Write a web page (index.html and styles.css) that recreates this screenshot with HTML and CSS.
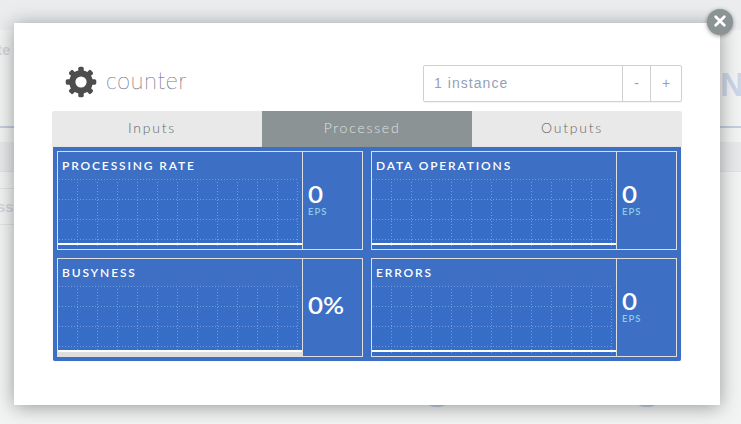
FILE: index.html
```html
<!DOCTYPE html>
<html lang="en">
<head>
<meta charset="utf-8">
<title>counter</title>
<link rel="stylesheet" href="styles.css">
</head>
<body>
<svg class="defs" width="0" height="0" aria-hidden="true">
  <symbol id="grid" viewBox="0 0 244 69">
    <path class="dots" d="M1 .5H241M1 20.5H241M1 40.5H241M1 60.5H241"/>
    <path class="dots" d="M19.500 3V69M39.500 3V69M59.500 3V69M79.500 3V69M99.500 3V69M119.500 3V69M139.500 3V69M159.500 3V69M179.500 3V69M199.500 3V69M219.500 3V69M239.500 3V69"/>
  </symbol>
</svg>
<div class="page">
  <div class="page-top"></div>
  <div class="page-chart"><span class="page-label">te</span><span class="page-title">N</span></div>
  <div class="page-band"></div>
  <div class="page-gap"></div>
  <div class="page-row">sso</div>
  <div class="page-canvas">
    <div class="node"></div>
    <div class="node"></div>
  </div>
</div>
<section class="modal">
  <button class="close" aria-label="Close"><svg width="14" height="14" viewBox="0 0 14 14"><path d="M2.700 1.700L11.300 10.300M11.300 1.700L2.700 10.300"/></svg></button>
  <header class="head">
    <svg class="gear" width="32" height="32" viewBox="-16 -16 32 32">
      <g fill="#4d4d4d">
        <rect x="-2.700" y="-15.300" width="5.400" height="30.600" rx="1.600"/>
        <rect x="-15.300" y="-2.700" width="30.600" height="5.400" rx="1.600"/>
        <g transform="rotate(45)"><rect x="-2.700" y="-15.300" width="5.400" height="30.600" rx="1.600"/><rect x="-15.300" y="-2.700" width="30.600" height="5.400" rx="1.600"/></g>
        <circle r="11.800"/>
      </g>
      <circle r="5.600" fill="#fff"/>
    </svg>
    <h1>counter</h1>
    <div class="stepper"><span class="value">1 instance</span><button class="minus">-</button><button class="plus">+</button></div>
  </header>
  <nav class="tabs"><span>Inputs</span><span class="active">Processed</span><span>Outputs</span></nav>
  <div class="panel">
    <article class="card">
      <div class="chart"><h2>PROCESSING RATE</h2><div class="plot"><svg width="244" height="69"><use href="#grid"/></svg></div></div>
      <div class="stat"><b>0</b><small>EPS</small></div>
    </article>
    <article class="card">
      <div class="chart"><h2>DATA OPERATIONS</h2><div class="plot"><svg width="244" height="69"><use href="#grid"/></svg></div></div>
      <div class="stat"><b>0</b><small>EPS</small></div>
    </article>
    <article class="card">
      <div class="chart"><h2>BUSYNESS</h2><div class="plot filled"><svg width="244" height="69"><use href="#grid"/></svg></div></div>
      <div class="stat percent"><b>0%</b></div>
    </article>
    <article class="card">
      <div class="chart"><h2>ERRORS</h2><div class="plot"><svg width="244" height="69"><use href="#grid"/></svg></div></div>
      <div class="stat"><b>0</b><small>EPS</small></div>
    </article>
  </div>
</section>
</body>
</html>
```

FILE: styles.css
```css
* { box-sizing: border-box; }
body { margin: 0; width: 741px; height: 424px; overflow: hidden; position: relative; background: #f2f4f3; font-family: Lato, sans-serif; }
button { padding: 0; font: inherit; color: inherit; background: none; border: 0; }
.defs { position: absolute; }
.page { height: 424px; overflow: hidden; }
.page-top { height: 30px; background: #ebecee; }
.page-chart { height: 98px; border-bottom: 2px solid #c5cde0; display: flex; justify-content: space-between; font: bold 15px "Liberation Sans", sans-serif; color: #d5d7dc; }
.page-label { margin: 11px 0 0 -3px; }
.page-title { margin: 37px -3px 0 0; font-size: 33px; line-height: 36px; color: #cdd7ea; }
.page-band { height: 30px; margin-top: 14px; background: #e8e9eb; border-bottom: 1px solid #e1e3e4; }
.page-gap { height: 16px; }
.page-row { width: 40px; height: 37px; border: solid #e1e3e3; border-width: 1px 0; font: bold 15px/35px "Liberation Sans", sans-serif; color: #d5d7dc; text-indent: -3px; }
.page-canvas { display: flex; gap: 170px; padding: 142px 0 0 417px; }
.node { width: 40px; height: 40px; border-radius: 50%; background: #bdcee9; }
.modal { position: absolute; left: 14px; top: 23px; width: 706px; height: 382px; padding: 42px 38px 0; background: #fff; box-shadow: 0 2px 18px rgba(0,0,0,.38); }
.close { position: absolute; right: -13px; top: -14px; width: 26px; height: 26px; border-radius: 50%; background: #8b9394; box-shadow: 0 1px 4px rgba(0,0,0,.4); display: grid; place-items: center; }
.close path { stroke: #fff; stroke-width: 2.7; stroke-linecap: round; }
.head { height: 46px; display: flex; padding-left: 12px; }
.gear { margin: .5px 0 0 .5px; }
h1 { margin: 1px 0 0 9.5px; font-weight: 100; font-size: 23px; line-height: 29px; letter-spacing: .85px; color: #55556a; -webkit-text-stroke: .25px #77778a; }
.stepper { margin-left: auto; width: 259px; height: 37px; display: flex; border: 1px solid #d0d0d0; border-radius: 2px; box-shadow: 0 1px 1px rgba(0,0,0,.05); color: #969eb9; font: 14px/35px "Liberation Sans", sans-serif; letter-spacing: 1.05px; }
.value { width: 198px; padding-left: 10px; }
.minus, .plus { border-left: 1px solid #d0d0d0; }
.minus { width: 28px; }
.plus { flex: 1; }
.tabs { height: 36px; display: grid; grid-template-columns: 210px 210px 210px; border-radius: 2px 2px 0 0; overflow: hidden; background: #e9e9e9; color: #666; font-weight: 300; font-size: 14px; line-height: 34px; letter-spacing: 1.75px; text-align: center; }
.tabs span { padding-right: 10px; }
.tabs .active { background: #8b9394; color: #dfe2e2; }
.panel { width: 628px; height: 214px; margin-left: 1px; padding: 4px; display: grid; grid-template: 99px 99px / 306px 306px; gap: 8px; background: #3d6fc4; border-radius: 0 0 2px 2px; box-shadow: 0 0 1px #bbb; color: #fff; }
.card { border: 1px solid #dedede; display: flex; }
.chart { width: 245px; border-right: 1px solid #dedede; }
h2 { margin: 0; height: 27px; padding-left: 4px; font: 600 12px/28px Lato, sans-serif; letter-spacing: 1.85px; white-space: nowrap; }
.plot { height: 70px; position: relative; background: linear-gradient(#3a6ec6, #356dc8); }
.plot svg { display: block; }
.plot::after { content: ""; position: absolute; left: 0; right: 0; top: 64px; height: 2px; background: #fff; }
.plot.filled::before { content: ""; position: absolute; left: 0; right: 0; top: 66px; bottom: -1px; background: #dedede; }
.dots { fill: none; stroke: #709be0; stroke-width: 1; stroke-dasharray: 1 2; }
.stat { padding: 31px 0 0 5px; }
.stat b { display: block; font: 600 23px/23px Lato, sans-serif; transform: scaleX(1.13); transform-origin: left; }
.stat small { display: block; font-weight: 600; font-size: 9.500px; line-height: 11px; letter-spacing: .95px; color: #8fcbea; }
.stat.percent { padding-top: 35px; }
```
